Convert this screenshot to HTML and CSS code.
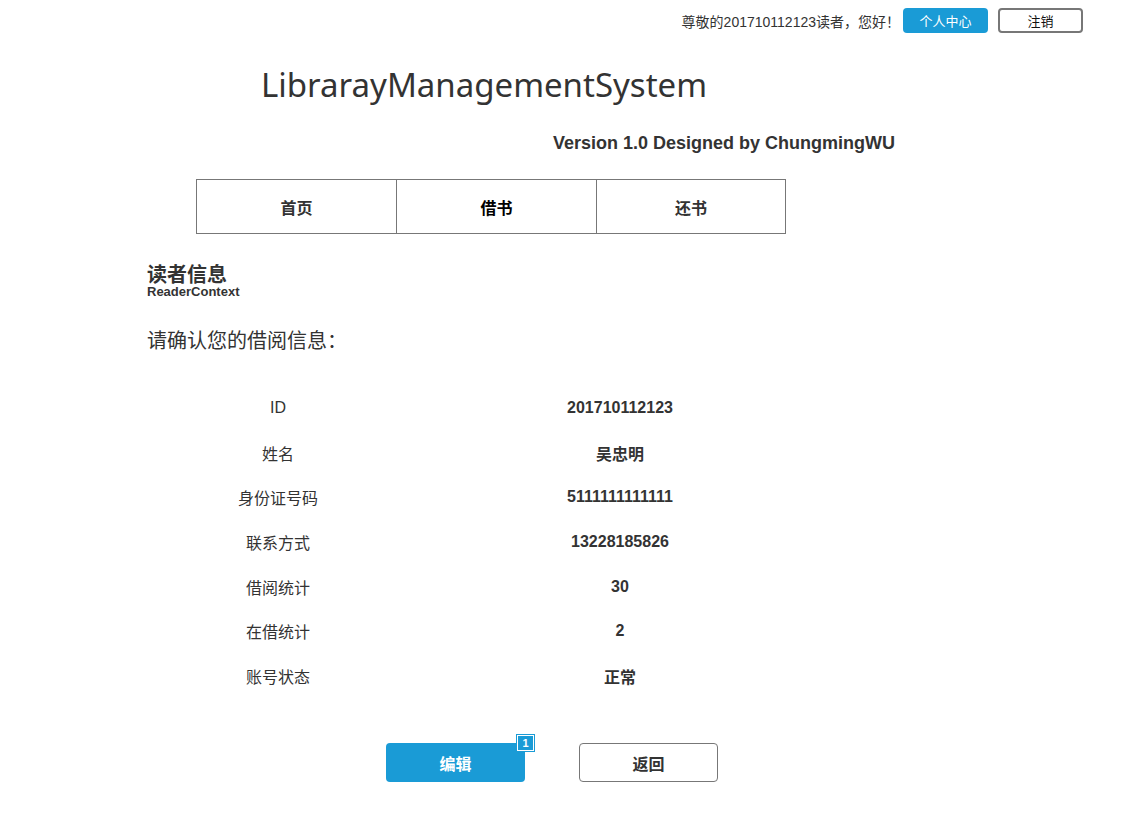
FILE: index.html
```html
<!DOCTYPE html>
<html lang="zh-CN">
<head>
<meta charset="utf-8">
<title>LibrarayManagementSystem</title>
<link rel="stylesheet" href="styles.css">
</head>
<body>
<div class="topbar">
  <span class="greet">尊敬的201710112123读者，您好！</span>
  <a class="btn-top btn-blue">个人中心</a>
  <a class="btn-top btn-outline">注销</a>
</div>
<header class="head">
  <h1 class="title">LibrarayManagementSystem</h1>
  <div class="version">Version 1.0 Designed by ChungmingWU</div>
</header>
<nav class="nav">
  <a class="nav-item">首页</a>
  <a class="nav-item active">借书</a>
  <a class="nav-item last">还书</a>
</nav>
<section class="content">
  <div class="sec-title">读者信息</div>
  <div class="sec-sub">ReaderContext</div>
  <p class="confirm">请确认您的借阅信息：</p>
  <div class="info">
    <div class="row"><span class="lab">ID</span><span class="val">201710112123</span></div>
    <div class="row"><span class="lab">姓名</span><span class="val">吴忠明</span></div>
    <div class="row"><span class="lab">身份证号码</span><span class="val">5111111111111</span></div>
    <div class="row"><span class="lab">联系方式</span><span class="val">13228185826</span></div>
    <div class="row"><span class="lab">借阅统计</span><span class="val">30</span></div>
    <div class="row"><span class="lab">在借统计</span><span class="val">2</span></div>
    <div class="row"><span class="lab">账号状态</span><span class="val">正常</span></div>
  </div>
  <div class="actions">
    <a class="btn-big btn-edit">编辑<span class="badge">1</span></a>
    <a class="btn-big btn-back">返回</a>
  </div>
</section>
</body>
</html>
```
FILE: styles.css
```css
* { box-sizing: border-box; }
body {
  margin: 0;
  background: #fff;
  color: #333;
  font-family: "Liberation Sans", Arial, "Noto Sans CJK SC", sans-serif;
}
a { text-decoration: none; cursor: pointer; }

.topbar {
  display: flex;
  justify-content: flex-end;
  align-items: center;
  padding: 8px 52px 0 0;
  height: 33px;
}
.greet {
  font-size: 14px;
  color: #333;
  margin-right: 3px;
  margin-top: 1px;
}
.btn-top {
  width: 85px;
  height: 25px;
  display: flex;
  align-items: center;
  justify-content: center;
  font-size: 13px;
  border-radius: 4px;
}
.btn-blue {
  background: #1a9bd6;
  color: #fff;
}
.btn-outline {
  margin-left: 10px;
  border: 2px solid #777;
  color: #111;
}

.head {
  padding-left: 261px;
}
.title {
  margin: 30px 0 0 0;
  font-family: "Noto Sans", "Open Sans", sans-serif;
  font-weight: 400;
  font-size: 33px;
  line-height: 44px;
  color: #333;
}
.version {
  margin: 26px 0 0 292px;
  font-size: 18px;
  font-weight: bold;
  color: #333;
  line-height: 20px;
}

.nav {
  display: flex;
  margin: 26px 0 0 196px;
  width: 590px;
  height: 55px;
  border: 1px solid #777;
}
.nav-item {
  display: flex;
  align-items: center;
  justify-content: center;
  width: 200px;
  border-right: 1px solid #777;
  font-size: 16px;
  font-weight: bold;
  color: #333;
}
.nav-item.last {
  flex: 1;
  border-right: none;
}
.nav-item.active { color: #000; }

.content {
  padding-left: 147px;
}
.sec-title {
  margin-top: 30px;
  font-size: 20px;
  font-weight: bold;
  line-height: 22px;
  color: #333;
}
.sec-sub {
  font-size: 13px;
  font-weight: bold;
  line-height: 12px;
  color: #333;
}
.confirm {
  margin: 30px 0 0 0;
  font-size: 20px;
  line-height: 26px;
  color: #333;
}
.info {
  margin-top: 32px;
  width: 700px;
}
.row {
  display: flex;
  height: 44.6px;
  align-items: center;
  font-size: 16px;
}
.lab {
  width: 262px;
  text-align: center;
  color: #333;
}
.val {
  width: 422px;
  text-align: center;
  font-weight: bold;
  color: #333;
}

.actions {
  display: flex;
  gap: 54px;
  margin: 45px 0 0 239px;
}
.btn-big {
  position: relative;
  width: 139px;
  height: 39px;
  display: flex;
  align-items: center;
  justify-content: center;
  border-radius: 4px;
  font-size: 16px;
  font-weight: bold;
}
.btn-edit {
  background: #1a9bd6;
  color: #fff;
}
.btn-back {
  border: 1px solid #777;
  color: #333;
}
.badge {
  position: absolute;
  top: -9px;
  right: -10px;
  width: 19px;
  height: 18px;
  background: #1a9bd6;
  box-shadow: inset 0 0 0 1px #1a9bd6, inset 0 0 0 2px #fff;
  color: #fff;
  font-size: 11px;
  font-weight: bold;
  display: flex;
  align-items: center;
  justify-content: center;
}
```
